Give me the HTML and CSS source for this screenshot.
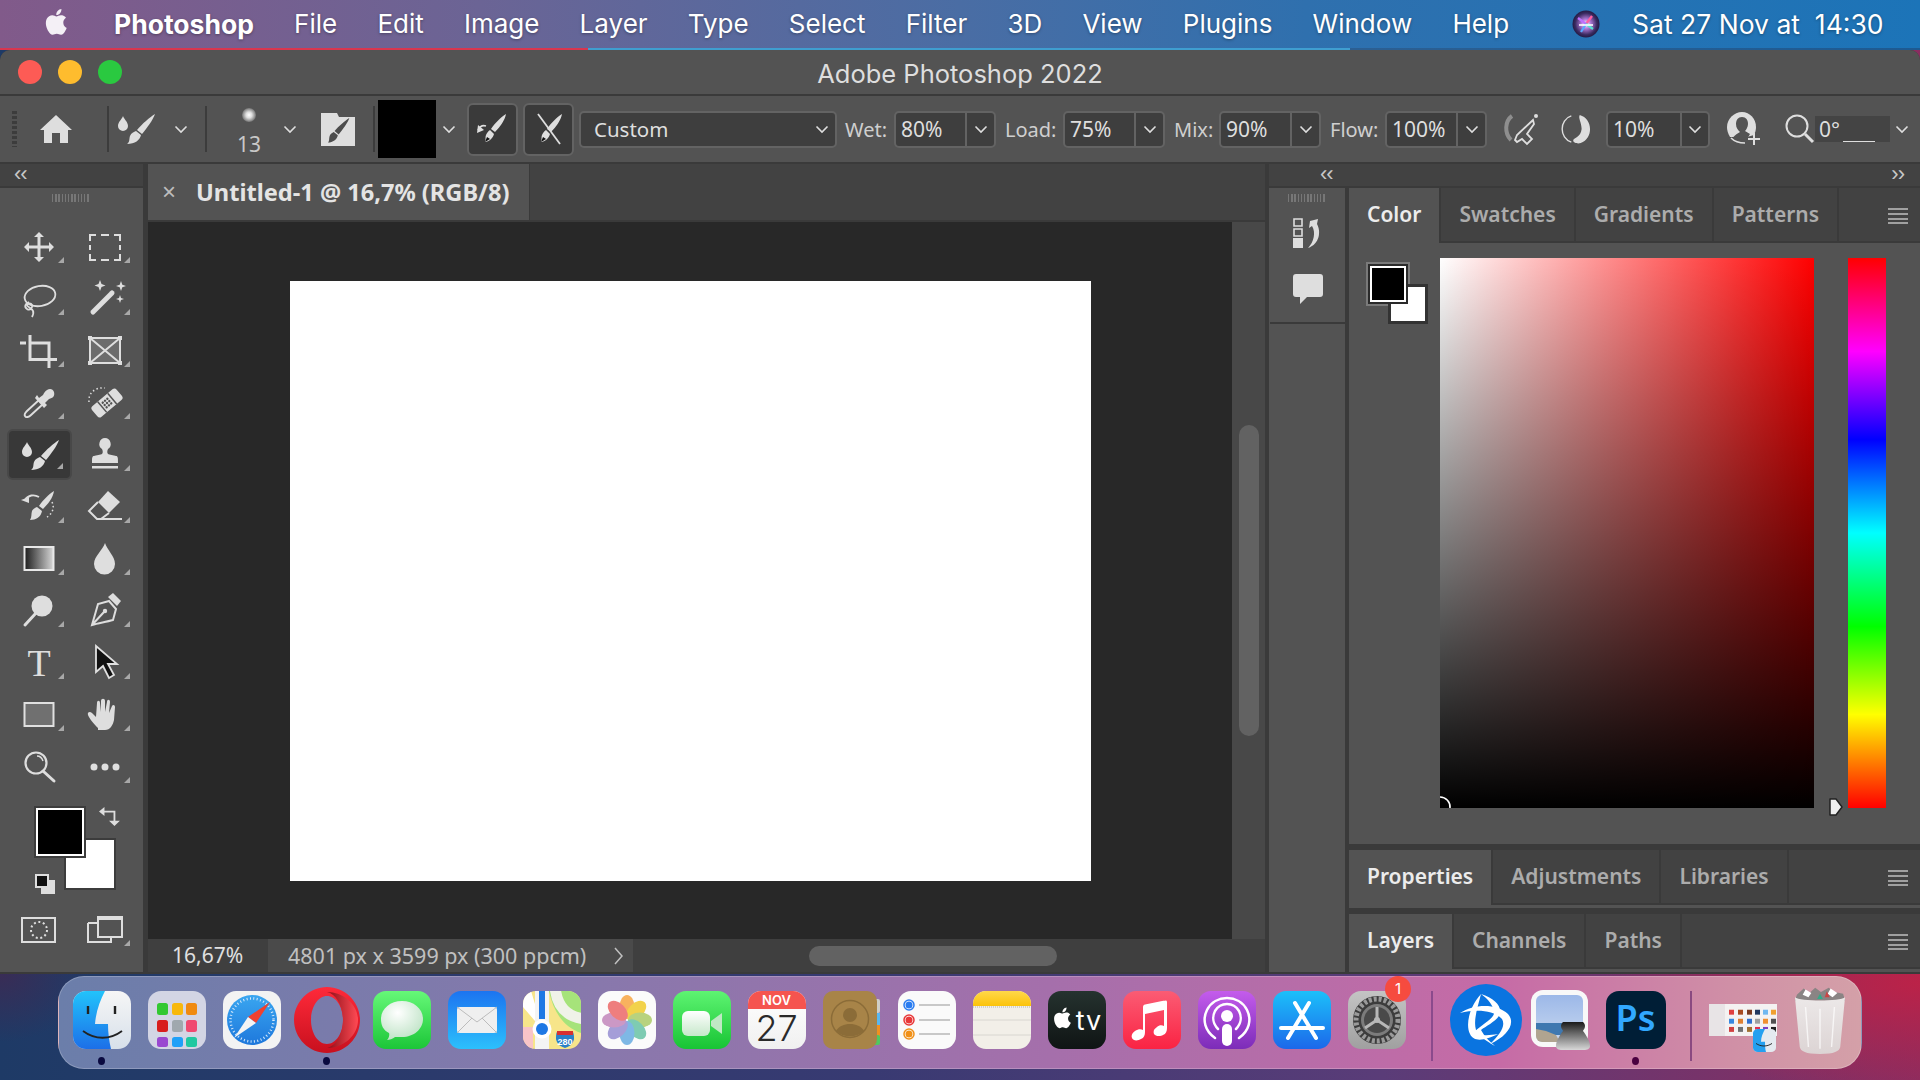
FILE: index.html
```html
<!DOCTYPE html>
<html lang="en">
<head>
<meta charset="utf-8">
<title>Adobe Photoshop 2022</title>
<link rel="stylesheet" href="styles.css">
</head>
<body>
<svg class="sprite" aria-hidden="true">
  <symbol id="chev" viewBox="0 0 14 9"><path d="M1.5 1.5 7 7l5.5-5.5" fill="none" stroke="currentColor" stroke-width="1.6"/></symbol>
  <symbol id="burger" viewBox="0 0 20 16"><path d="M0 1h20M0 6h20M0 11h20M0 15h20" fill="none" stroke="currentColor" stroke-width="1.6"/></symbol>
  <symbol id="apple" viewBox="0 0 24 24"><path fill="currentColor" d="M17.05 12.54c-.03-2.6 2.12-3.85 2.22-3.91-1.21-1.77-3.09-2.01-3.76-2.04-1.6-.16-3.12.94-3.93.94-.81 0-2.06-.92-3.39-.89-1.74.03-3.35 1.01-4.25 2.57-1.81 3.14-.46 7.8 1.3 10.35.86 1.25 1.89 2.65 3.24 2.6 1.3-.05 1.79-.84 3.36-.84s2.01.84 3.39.81c1.4-.02 2.28-1.27 3.14-2.53.99-1.45 1.4-2.85 1.42-2.93-.03-.01-2.72-1.04-2.74-4.13zM14.47 4.9c.72-.87 1.2-2.08 1.07-3.28-1.03.04-2.28.69-3.02 1.55-.66.77-1.24 2-1.09 3.18 1.15.09 2.32-.58 3.04-1.45z"/></symbol>
  <symbol id="brush" viewBox="0 0 38 30"><path fill="currentColor" d="M6 2C7 5 11 8 11 12a5 5 0 0 1-10 0C1 8 5 5 6 2zM38 0c-2 6-8 14-13 20l-5-4C25 10 33 3 38 0zM19 17l5 4c-1 5-6 9-14 9 3-2 2-5 3-8 1-3 4-4 6-5z"/></symbol>
</svg>

<header class="menubar">
  <svg class="apple"><use href="#apple"/></svg>
  <nav class="menus">
    <span class="menu menu-app">Photoshop</span>
    <span class="menu">File</span><span class="menu">Edit</span><span class="menu">Image</span><span class="menu">Layer</span><span class="menu">Type</span><span class="menu">Select</span><span class="menu">Filter</span><span class="menu">3D</span><span class="menu">View</span><span class="menu">Plugins</span><span class="menu">Window</span><span class="menu">Help</span>
  </nav>
  <svg class="siri" viewBox="0 0 28 28">
    <defs><radialGradient id="siriG" cx="50%" cy="50%" r="50%"><stop offset="0" stop-color="#fff"/><stop offset=".35" stop-color="#b07ad8"/><stop offset=".8" stop-color="#3a2a60"/><stop offset="1" stop-color="#241a44"/></radialGradient></defs>
    <circle cx="14" cy="14" r="13.5" fill="url(#siriG)"/>
    <path d="M14 14 20 6" stroke="#ff5fa2" stroke-width="2.4"/><path d="M14 14 6 8" stroke="#c070ff" stroke-width="2.2"/><path d="M14 14 21 19" stroke="#58e0d0" stroke-width="2.2"/><path d="M14 14 9 22" stroke="#58a8ff" stroke-width="2.2"/><path d="M7 15h14" stroke="#fff" stroke-width="1.6"/>
  </svg>
  <span class="clock">Sat 27 Nov at&nbsp; 14:30</span>
</header>
<div class="menuline"></div>

<main class="window">
  <div class="titlebar">
    <div class="lights"><i class="light red"></i><i class="light yellow"></i><i class="light green"></i></div>
    <div class="title">Adobe Photoshop 2022</div>
  </div>

  <div class="options">
    <i class="grip"></i>
    <svg class="opt-home" viewBox="0 0 32 30"><path fill="currentColor" d="M16 1 32 16h-4v13h-8V19h-8v10H4V16H0z"/></svg>
    <i class="vsep vsep-a"></i>
    <svg class="opt-brush"><use href="#brush"/></svg>
    <svg class="chev chev-a"><use href="#chev"/></svg>
    <i class="vsep vsep-b"></i>
    <div class="preset"><i class="preset-dot"></i><span class="preset-num">13</span></div>
    <svg class="chev chev-b"><use href="#chev"/></svg>
    <svg class="opt-folder" viewBox="0 0 34 33">
      <path fill="#dedede" d="M0 0h16l2 4h16v29H0z"/>
      <g transform="translate(7 5) scale(.82)"><path fill="#4c4c4c" d="M26 0c-2 6-8 14-13 20L8 16C13 10 21 3 26 0zM7 17l5 4c-1 5-6 9-12 9 2-2 1-5 2-8 1-3 3-4 5-5z"/></g>
    </svg>
    <i class="vsep vsep-c"></i>
    <div class="opt-swatch"></div>
    <svg class="chev chev-c"><use href="#chev"/></svg>
    <button class="toggle">
      <svg viewBox="0 0 36 36" class="toggle-ico"><path fill="#dedede" d="M31 3c-1 6-6 13-11 18l-4-3c4-6 10-12 15-15zM15 19l4 4c-1 4-5 8-9 8 1-2 0-5 1-7 1-2 2-4 4-5z"/><path fill="#111" d="M12 26l3 2-5 3z"/><path fill="none" stroke="#dedede" stroke-width="1.6" d="M3 19c2-4 5-5 8-4"/><path fill="#dedede" d="M3 14 2 22l7-3z"/></svg>
    </button>
    <button class="toggle toggle-b">
      <svg viewBox="0 0 36 36" class="toggle-ico"><path fill="#dedede" d="M31 3c-1 6-6 13-11 18l-4-3c4-6 10-12 15-15zM15 19l4 4c-1 4-5 8-9 8 1-2 0-5 1-7 1-2 2-4 4-5z"/><path fill="#111" d="M12 26l3 2-5 3z"/><path fill="none" stroke="#dedede" stroke-width="1.8" d="M7 3 29 33"/></svg>
    </button>
    <div class="select"><span>Custom</span><svg class="chev chev-s"><use href="#chev"/></svg></div>
    <label class="lbl lbl-wet">Wet:</label>
    <div class="field"><span class="val">80%</span><span class="drop"><svg class="chev"><use href="#chev"/></svg></span></div>
    <label class="lbl lbl-load">Load:</label>
    <div class="field"><span class="val">75%</span><span class="drop"><svg class="chev"><use href="#chev"/></svg></span></div>
    <label class="lbl lbl-mix">Mix:</label>
    <div class="field"><span class="val">90%</span><span class="drop"><svg class="chev"><use href="#chev"/></svg></span></div>
    <label class="lbl lbl-flow">Flow:</label>
    <div class="field"><span class="val">100%</span><span class="drop"><svg class="chev"><use href="#chev"/></svg></span></div>
    <svg class="opt-air" viewBox="0 0 36 32"><path fill="none" stroke="#8e8e8e" stroke-width="4" d="M9 3C2 8 1 20 8 27"/><path fill="none" stroke="#dedede" stroke-width="1.8" d="M30 7 14 22l-2 5 2 2 5-3 5 5 5-5-5-5 7-10z"/><circle cx="33" cy="3" r="2" fill="#dedede"/></svg>
    <svg class="opt-ring" viewBox="0 0 32 32"><path fill="none" stroke="#dedede" stroke-width="1.5" d="M11 2C-2 6-2 26 11 30"/><path fill="#dedede" d="M20 1c14 4 15 25 1 30-3 1-8 0-8-3 1-3 8-3 9-12 0-7-4-12-2-15z"/></svg>
    <div class="field field-pct"><span class="val">10%</span><span class="drop"><svg class="chev"><use href="#chev"/></svg></span></div>
    <svg class="opt-person" viewBox="0 0 36 34"><path fill="#dedede" d="M15 0c8 0 14 7 14 15 0 3-1 6-2 8l-7 2H3C1 22 0 18 0 15 0 7 7 0 15 0z"/><path fill="#535353" d="M15 5c4 0 6 3 6 7 0 3-2 6-3 7l5 3-3 5-15 1c1-4 5-6 8-8-2-2-4-4-4-8 0-4 2-7 6-7z"/><path fill="none" stroke="#dedede" stroke-width="1.6" d="M4 26c3 3 8 5 14 5"/><path stroke="#dedede" stroke-width="2" d="M27 21v12M21 27h12"/></svg>
    <svg class="opt-search" viewBox="0 0 30 30"><circle cx="12" cy="12" r="10.5" fill="none" stroke="#dedede" stroke-width="2"/><path stroke="#dedede" stroke-width="3" d="m20 20 8 8"/></svg>
    <div class="angle"><span>0°</span><i class="angle-line"></i></div>
    <svg class="chev chev-e"><use href="#chev"/></svg>
  </div>

  <div class="workspace">
    <aside class="leftpanel">
      <div class="collapse"><span class="arrows">‹‹</span></div>
      <div class="toolbar">
        <i class="handle"></i>
        <div class="tools">
          <div class="tool"><svg viewBox="0 0 36 36"><path fill="currentColor" d="M18 3l5 5h-3.500v8.500H28V13l5 5-5 5v-3.500h-8.500V28H23l-5 5-5-5h3.500v-8.500H8V23l-5-5 5-5v3.500h8.500V8H13z"/></svg><i class="more"></i></div>
          <div class="tool"><svg viewBox="0 0 36 36"><path fill="none" stroke="currentColor" stroke-width="2" d="M3 12V6h6M14 6h8M27 6h6v6M33 16v5M33 25v6h-6M22 31h-8M9 31H3v-6M3 21v-5"/></svg><i class="more"></i></div>

          <div class="tool"><svg viewBox="0 0 36 36"><g fill="none" stroke="currentColor" stroke-width="1.800"><ellipse cx="19" cy="15" rx="15.500" ry="10" transform="rotate(-10 19 15)"/><path d="M8 21c-4 1-5 5-2 7 3 2 6-1 5-4-1-2-4-2-5 0 0 2 5 3 6 6 1 2 0 4-1 6"/></g></svg><i class="more"></i></div>
          <div class="tool"><svg viewBox="0 0 36 36"><path fill="none" stroke="currentColor" stroke-width="5" stroke-linecap="round" d="M6 31 25 12"/><path fill="currentColor" d="M13 -1l1.500 4 4 1.500-4 1.500-1.500 4-1.500-4-4-1.500 4-1.500zM34 0l1.300 3.700 3.700 1.300-3.700 1.300L34 10l-1.300-3.700L29 5l3.700-1.300zM33 14l1 3 3 1-3 1-1 3-1-3-3-1 3-1z"/></svg><i class="more"></i></div>

          <div class="tool"><svg viewBox="0 0 36 36"><path fill="none" stroke="currentColor" stroke-width="3" d="M-1 10h6M9 2v24.500h27M9 10h19v25"/></svg><i class="more"></i></div>
          <div class="tool"><svg viewBox="0 0 36 36"><rect x="3" y="5" width="30" height="25" fill="#6c6c6c"/><path fill="none" stroke="currentColor" stroke-width="2" d="M3 5h30v25H3zM3 5l30 25M33 5 3 30"/><path fill="currentColor" d="M1 3h4v4H1zM31 3h4v4h-4zM1 28h4v4H1zM31 28h4v4h-4z"/></svg><i class="more"></i></div>

          <div class="tool"><svg viewBox="0 0 36 36"><path fill="none" stroke="currentColor" stroke-width="1.900" d="m18 15-12 11c-2 2-3 4-2 5 1 2 4 1 6-1l12-11"/><path fill="currentColor" d="M14 13l9 10 3-3-2-2 4-4c4-1 6-3 5-7-1-3-4-4-7-2-2 1-3 3-4 5l-4 3-2-3z"/></svg><i class="more"></i></div>
          <div class="tool"><svg viewBox="0 0 36 36"><rect x="4" y="11" width="32" height="14" rx="3" fill="currentColor" transform="rotate(-40 20 18)"/><g fill="#535353" transform="rotate(-40 20 18)"><rect x="13" y="11" width="1.500" height="14" /><rect x="26" y="11" width="1.500" height="14"/><circle cx="17" cy="15" r="1.200"/><circle cx="20" cy="15" r="1.200"/><circle cx="23" cy="15" r="1.200"/><circle cx="17" cy="18" r="1.200"/><circle cx="20" cy="18" r="1.200"/><circle cx="23" cy="18" r="1.200"/><circle cx="17" cy="21" r="1.200"/><circle cx="20" cy="21" r="1.200"/><circle cx="23" cy="21" r="1.200"/></g><path fill="none" stroke="currentColor" stroke-width="1.500" stroke-dasharray="1.500 2.500" d="M2 17C1 8 8 2 18 3"/></svg><i class="more"></i></div>

          <div class="tool tool-on"><svg class="tool-brush"><use href="#brush"/></svg><i class="more"></i></div>
          <div class="tool"><svg viewBox="0 0 36 36"><path fill="currentColor" d="M18 1a6 6 0 0 1 3 11c-1 2-1 4 0 5 1 1 6 1 8 2 2 0 2 2 2 7H5c0-5 0-7 2-7 2-1 7-1 8-2 1-1 1-3 0-5A6 6 0 0 1 18 1zM5 29h26v2.500H5z"/></svg><i class="more"></i></div>

          <div class="tool"><svg viewBox="0 0 36 36"><path fill="currentColor" d="M33 2c-1 7-6 13-11 18l-4-3c4-6 10-12 15-15zM16 18l5 4c-1 6-6 9-12 9 2-3 1-6 2-9 1-2 3-3 5-4z"/><path fill="none" stroke="currentColor" stroke-width="1.800" d="M4 11c3-5 9-6 14-3"/><path fill="currentColor" d="M0 11l8-3 0 6z"/><path fill="none" stroke="currentColor" stroke-width="1.500" stroke-dasharray="1.500 2.500" d="M31 13c3 6 0 12-5 15"/></svg><i class="more"></i></div>
          <div class="tool"><svg viewBox="0 0 36 36"><path fill="currentColor" d="M21 2 33 13 22 24 11 13z"/><path fill="none" stroke="currentColor" stroke-width="2" d="M11 13 2 22l8 8h25M14 30l8-6"/></svg><i class="more"></i></div>

          <div class="tool"><svg viewBox="0 0 36 36"><defs><linearGradient id="gradTool"><stop offset="0" stop-color="#1c1c1c"/><stop offset="1" stop-color="#d8d8d8"/></linearGradient></defs><rect x="3.500" y="6" width="29" height="23" fill="url(#gradTool)" stroke="#e8e8e8" stroke-width="2"/></svg><i class="more"></i></div>
          <div class="tool"><svg viewBox="0 0 36 36"><path fill="currentColor" d="M18 2c2 7 10 13 10 21a10.500 10.500 0 0 1-21 0C7 15 16 9 18 2z"/></svg><i class="more"></i></div>

          <div class="tool"><svg viewBox="0 0 36 36"><circle cx="21" cy="13" r="10.500" fill="currentColor"/><path stroke="currentColor" stroke-width="3" stroke-linecap="round" d="M15 20 4 32"/></svg><i class="more"></i></div>
          <div class="tool"><svg viewBox="0 0 36 36"><path fill="none" stroke="currentColor" stroke-width="2" d="M22 8 11 11C9 18 7 25 5 32c7-2 14-3 21-5l3-11zM5 32l12-13"/><circle cx="18" cy="18" r="2.200" fill="currentColor"/><path fill="currentColor" d="m26 0 8 8-4 5-9-9z"/></svg><i class="more"></i></div>

          <div class="tool"><svg viewBox="0 0 36 36"><text x="18" y="31" class="t-glyph">T</text></svg><i class="more"></i></div>
          <div class="tool"><svg viewBox="0 0 36 36"><path fill="#111" stroke="#e0e0e0" stroke-width="1.800" d="M9 1v26l7-6 6 12 5-3-6-11h9z"/></svg><i class="more"></i></div>

          <div class="tool"><svg viewBox="0 0 36 36"><rect x="3.500" y="6" width="29" height="23" fill="#707070" stroke="#e0e0e0" stroke-width="2"/></svg><i class="more"></i></div>
          <div class="tool"><svg viewBox="0 0 36 36"><path fill="currentColor" d="M11 31C7 27 2 21 1 18c-1-3 2-4 4-2l4 4 1-14c0-3 3-3 3 0l1 9V4c0-3 4-3 4 0v11l2-10c0-3 3-3 3 0l-1 11 3-7c1-2 3-1 3 1l-1 13c-1 5-4 10-9 10h-7z"/></svg><i class="more"></i></div>

          <div class="tool"><svg viewBox="0 0 36 36"><circle cx="15" cy="14" r="10.500" fill="none" stroke="currentColor" stroke-width="2.200"/><path stroke="currentColor" stroke-width="3" stroke-linecap="round" d="m22 22 11 10"/><path fill="none" stroke="currentColor" stroke-width="1.400" d="M16 7c3 0 5 2 6 5"/></svg></div>
          <div class="tool"><svg viewBox="0 0 36 36"><circle cx="7" cy="18" r="3.500" fill="currentColor"/><circle cx="18" cy="18" r="3.500" fill="currentColor"/><circle cx="29" cy="18" r="3.500" fill="currentColor"/></svg><i class="more"></i></div>
        </div>

        <div class="swatches">
          <i class="sw-bg"></i><i class="sw-fg"></i>
          <svg class="sw-swap" viewBox="0 0 22 22"><path fill="none" stroke="currentColor" stroke-width="2" d="M5 5h12v12"/><path fill="currentColor" d="M0 5l6-5v10zM11 15h12l-6 6z"/></svg>
          <i class="sw-def-bg"></i><i class="sw-def-fg"></i>
        </div>

        <div class="tools tools-last">
          <div class="tool"><svg viewBox="0 0 36 36"><rect x="1" y="6" width="33" height="24" fill="none" stroke="currentColor" stroke-width="2"/><circle cx="18" cy="18" r="8" fill="none" stroke="currentColor" stroke-width="2" stroke-dasharray="2 2.600"/></svg></div>
          <div class="tool"><svg viewBox="0 0 36 36"><path fill="none" stroke="currentColor" stroke-width="2" d="M1 11h11M1 11v19h23v-5"/><rect x="11" y="5" width="24" height="20" fill="none" stroke="currentColor" stroke-width="2"/><path stroke="currentColor" stroke-width="3" d="M11 6.500h24"/></svg><i class="more"></i></div>
        </div>
      </div>
    </aside>

    <section class="docarea">
      <div class="tabbar">
        <div class="doctab"><span class="tabx">×</span><span class="tabname">Untitled-1 @ 16,7% (RGB/8)</span></div>
      </div>
      <div class="viewrow">
        <div class="canvasarea"><div class="canvas"></div></div>
        <div class="vtrack"><i class="vthumb"></i></div>
      </div>
      <div class="statusbar">
        <span class="st-zoom">16,67%</span>
        <span class="st-info">4801 px x 3599 px (300 ppcm)<svg class="st-arrow" viewBox="0 0 9 18"><path d="M1 1l7 8-7 8" fill="none" stroke="currentColor" stroke-width="1.500"/></svg></span>
        <span class="st-track"><i class="hthumb"></i></span>
      </div>
    </section>

    <aside class="rightside">
      <div class="collapse collapse-r"><span class="arrows">‹‹</span><span class="arrows">››</span></div>
      <div class="rightbody">
        <div class="strip">
          <div class="strip-top">
            <i class="handle handle-s"></i>
            <svg class="strip-hist" viewBox="0 0 30 32"><path fill="none" stroke="#dedede" stroke-width="1.600" d="M1 1h8v7H1zM1 11h8v7H1z"/><path fill="#dedede" d="M0 20h10v10H0z"/><path fill="#dedede" d="M17 3l8-2-1 5c4 7 3 20-9 24 6-6 8-16 4-22l-3 2z"/></svg>
            <svg class="strip-note" viewBox="0 0 30 30"><path fill="#dedede" d="M3 0h24a3 3 0 0 1 3 3v17a3 3 0 0 1-3 3H14l-7 7v-7H3a3 3 0 0 1-3-3V3a3 3 0 0 1 3-3z"/></svg>
          </div>
        </div>
        <div class="panels">
          <section class="panel panel-color">
            <div class="tabs">
              <span class="tab on">Color</span><span class="tab">Swatches</span><span class="tab">Gradients</span><span class="tab">Patterns</span>
              <svg class="burger"><use href="#burger"/></svg>
            </div>
            <div class="colorbody">
              <div class="cswatch"><i class="cs-back"></i><i class="cs-bg"></i><i class="cs-fg"></i></div>
              <div class="field2d"><svg class="pick" viewBox="0 0 12 12"><path d="M0 1a10 10 0 0 1 10 11" fill="none" stroke="#fff" stroke-width="1.600"/></svg></div>
              <svg class="hue-mark" viewBox="0 0 16 18"><path d="M2 1h6l6 8-6 8H2z" fill="#eee" stroke="#222" stroke-width="1.500" stroke-linejoin="round"/></svg>
              <div class="huebar"></div>
            </div>
          </section>
          <section class="panel panel-short">
            <div class="tabs">
              <span class="tab on">Properties</span><span class="tab">Adjustments</span><span class="tab">Libraries</span>
              <svg class="burger"><use href="#burger"/></svg>
            </div>
          </section>
          <section class="panel panel-short">
            <div class="tabs">
              <span class="tab on">Layers</span><span class="tab">Channels</span><span class="tab">Paths</span>
              <svg class="burger"><use href="#burger"/></svg>
            </div>
          </section>
        </div>
      </div>
    </aside>
  </div>
</main>

<footer class="dock">
  <div class="slot"><svg viewBox="0 0 58 58" class="app"><defs><linearGradient id="fL" x1="0" y1="0" x2="0" y2="1"><stop offset="0" stop-color="#22c3fb"/><stop offset="1" stop-color="#1c6fe8"/></linearGradient><linearGradient id="fR" x1="0" y1="0" x2="0" y2="1"><stop offset="0" stop-color="#f6f6f6"/><stop offset="1" stop-color="#d7e0ea"/></linearGradient></defs><rect width="58" height="58" rx="13" fill="url(#fR)"/><path fill="url(#fL)" d="M13 0h19c-5 10-9 20-10 33h13c0 8 1 17 3 25H13A13 13 0 0 1 0 45V13A13 13 0 0 1 13 0z"/><path d="M15 15v8M42 15v8" stroke="#222" stroke-width="2.400"/><path d="M10 40c12 9 27 9 39 0" fill="none" stroke="#222" stroke-width="1.800"/></svg><i class="run"></i></div>

  <div class="slot"><svg viewBox="0 0 58 58" class="app"><rect width="58" height="58" rx="13" fill="#d3d5e4"/><rect x="9" y="12" width="11" height="12" rx="2.500" fill="#32c832"/><rect x="24" y="12" width="11" height="12" rx="2.500" fill="#f8b80c"/><rect x="38" y="12" width="11" height="12" rx="2.500" fill="#f08a10"/><rect x="9" y="29" width="11" height="12" rx="2.500" fill="#d81e1e"/><rect x="24" y="29" width="11" height="12" rx="2.500" fill="#a0a8ae"/><rect x="38" y="29" width="11" height="12" rx="2.500" fill="#f04870"/><rect x="9" y="46" width="11" height="10" rx="2.500" fill="#9a48d0"/><rect x="24" y="46" width="11" height="10" rx="2.500" fill="#20a0f8"/><rect x="38" y="46" width="11" height="10" rx="2.500" fill="#20c8a0"/></svg></div>

  <div class="slot"><svg viewBox="0 0 58 58" class="app"><defs><linearGradient id="saf" x1="0" y1="0" x2="0" y2="1"><stop offset="0" stop-color="#3aa6f0"/><stop offset="1" stop-color="#1e78dc"/></linearGradient></defs><rect width="58" height="58" rx="13" fill="#f3f3f3"/><circle cx="29" cy="29" r="25" fill="url(#saf)"/><circle cx="29" cy="29" r="21.500" fill="none" stroke="#d5e8fa" stroke-width="2.500" stroke-dasharray="1 2.400"/><path fill="#f0412f" d="M47 11 25 26l8 6z"/><path fill="#f4f4f4" d="M11 47l22-15-8-6z"/></svg></div>

  <div class="slot"><svg viewBox="0 0 66 66" class="app app-66"><defs><linearGradient id="opA" x1="0" y1="0" x2="0" y2="1"><stop offset="0" stop-color="#ff2a3a"/><stop offset="1" stop-color="#c8101e"/></linearGradient><linearGradient id="opB" x1="0" y1="0" x2="1" y2="0"><stop offset="0" stop-color="#8c0f18"/><stop offset="1" stop-color="#ff4a54"/></linearGradient></defs><path fill="url(#opA)" fill-rule="evenodd" d="M33 0c18 0 33 15 33 33S51 66 33 66 0 51 0 33 15 0 33 0zm0 9c-9 0-16 11-16 24s7 24 16 24 16-11 16-24S42 9 33 9z"/><path fill="url(#opB)" fill-rule="evenodd" d="M33 5c17 0 31 13 31 28S50 61 33 61c9-2 16-14 16-28S42 7 33 5z"/></svg><i class="run"></i></div>

  <div class="slot"><svg viewBox="0 0 58 58" class="app"><defs><linearGradient id="msgG" x1="0" y1="0" x2="0" y2="1"><stop offset="0" stop-color="#66f878"/><stop offset="1" stop-color="#1cc638"/></linearGradient><radialGradient id="msgW" cx=".4" cy=".3" r=".8"><stop offset="0" stop-color="#fff"/><stop offset="1" stop-color="#b8e0c0"/></radialGradient></defs><rect width="58" height="58" rx="13" fill="url(#msgG)"/><path fill="url(#msgW)" d="M29 10c12 0 21 8 21 18s-9 18-21 18c-3 0-5 0-7 0-2 2-6 3-8 3 1-1 3-4 2-7-6-3-8-8-8-14 0-10 9-18 21-18z"/></svg></div>

  <div class="slot"><svg viewBox="0 0 58 58" class="app"><defs><linearGradient id="mailG" x1="0" y1="0" x2="0" y2="1"><stop offset="0" stop-color="#1c74f0"/><stop offset="1" stop-color="#2cc0fc"/></linearGradient></defs><rect width="58" height="58" rx="13" fill="url(#mailG)"/><rect x="9" y="16" width="40" height="26" rx="3" fill="#efefef"/><path d="m9 16 20 15 20-15M9 42l15-15M49 42 34 27" fill="none" stroke="#bcbcbc" stroke-width="1"/></svg></div>

  <div class="slot"><svg viewBox="0 0 58 58" class="app"><defs><clipPath id="mapC"><rect width="58" height="58" rx="13"/></clipPath></defs><g clip-path="url(#mapC)"><rect width="58" height="58" fill="#f7e58a"/><path fill="#a6e37a" d="M26 0h32v42C40 36 30 20 26 0z"/><path fill="none" stroke="#f0f2e8" stroke-width="11" d="M32-4c2 20 12 30 30 32"/><path fill="#f8c4c8" d="M0 36h10v22H0z"/><path fill="#fff" d="M0 0h8l8 26-4 4L0 16z"/><rect x="12" y="-2" width="14" height="60" fill="#f4f4f4"/><rect x="16" y="-2" width="6" height="30" fill="#1e78e4"/><circle cx="19" cy="38" r="9.500" fill="#fff"/><circle cx="19" cy="38" r="6" fill="#1e78e4"/><path fill="#2a80c8" d="M33 48c0-2 0-6 1-7h16c1 2 1 5 1 7-1 6-6 8-9 9-3-1-8-3-9-9z"/><rect x="34" y="40" width="16" height="4" fill="#d83030"/><text x="42" y="54" class="map-num">280</text></g></svg></div>

  <div class="slot"><svg viewBox="0 0 58 58" class="app"><rect width="58" height="58" rx="13" fill="#fbfbfb"/><g opacity=".8"><ellipse cx="29" cy="16" rx="7.500" ry="12" fill="#f8a038"/><ellipse cx="29" cy="16" rx="7.500" ry="12" fill="#f0c820" transform="rotate(45 29 29)"/><ellipse cx="29" cy="16" rx="7.500" ry="12" fill="#a8c860" transform="rotate(90 29 29)"/><ellipse cx="29" cy="16" rx="7.500" ry="12" fill="#60c0a0" transform="rotate(135 29 29)"/><ellipse cx="29" cy="16" rx="7.500" ry="12" fill="#60a8e0" transform="rotate(180 29 29)"/><ellipse cx="29" cy="16" rx="7.500" ry="12" fill="#9088d0" transform="rotate(225 29 29)"/><ellipse cx="29" cy="16" rx="7.500" ry="12" fill="#c080b8" transform="rotate(270 29 29)"/><ellipse cx="29" cy="16" rx="7.500" ry="12" fill="#ec6060" transform="rotate(315 29 29)"/></g></svg></div>

  <div class="slot"><svg viewBox="0 0 58 58" class="app"><defs><linearGradient id="ftG" x1="0" y1="0" x2="0" y2="1"><stop offset="0" stop-color="#5ef472"/><stop offset="1" stop-color="#18c434"/></linearGradient><linearGradient id="ftW" x1="0" y1="0" x2="0" y2="1"><stop offset="0" stop-color="#fff"/><stop offset="1" stop-color="#c6e8ca"/></linearGradient></defs><rect width="58" height="58" rx="13" fill="url(#ftG)"/><rect x="9" y="20" width="28" height="25" rx="6" fill="url(#ftW)"/><path fill="#bfe8c4" d="M38 30 49 22v21l-11-8z"/></svg></div>

  <div class="slot"><div class="cal"><span class="cal-m">NOV</span><span class="cal-d">27</span></div></div>

  <div class="slot"><svg viewBox="0 0 58 58" class="app"><rect x="50" y="8" width="7" height="14" rx="2" fill="#cfcfc8"/><rect x="50" y="22" width="7" height="12" fill="#58b8f0"/><rect x="50" y="34" width="7" height="12" fill="#f09020"/><rect x="50" y="44" width="7" height="10" rx="2" fill="#50c860"/><rect width="54" height="58" rx="10" fill="#a88448"/><circle cx="27" cy="28" r="18.500" fill="none" stroke="#8b6c38" stroke-width="1.500"/><circle cx="27" cy="24" r="7" fill="#8b6c38"/><path fill="#8b6c38" d="M13 40c3-5 8-7 14-7s11 2 14 7c-7 7-21 7-28 0z"/></svg></div>

  <div class="slot"><svg viewBox="0 0 58 58" class="app"><rect width="58" height="58" rx="13" fill="#fafafa"/><circle cx="11" cy="14" r="5" fill="#fff" stroke="#2a7cf0" stroke-width="1.500"/><circle cx="11" cy="14" r="3.500" fill="#2a7cf0"/><circle cx="11" cy="29" r="5" fill="#fff" stroke="#e83838" stroke-width="1.500"/><circle cx="11" cy="29" r="3.500" fill="#e83838"/><circle cx="11" cy="43" r="5" fill="#fff" stroke="#f09018" stroke-width="1.500"/><circle cx="11" cy="43" r="3.500" fill="#f09018"/><path d="M21 14h31M21 29h31M21 43h31" stroke="#b8b8b8" stroke-width="1.500"/></svg></div>

  <div class="slot"><svg viewBox="0 0 58 58" class="app"><defs><clipPath id="noteC"><rect width="58" height="58" rx="13"/></clipPath><linearGradient id="noteY" x1="0" y1="0" x2="0" y2="1"><stop offset="0" stop-color="#ffd84a"/><stop offset="1" stop-color="#fcc30a"/></linearGradient></defs><g clip-path="url(#noteC)"><rect width="58" height="58" fill="#f2efe8"/><rect width="58" height="15" fill="url(#noteY)"/><path d="M0 16h58" stroke="#c8c8c0" stroke-width="1.500" stroke-dasharray="1 1"/><path d="M0 29h58M0 44h58" stroke="#d8d6d0" stroke-width="1"/></g></svg></div>

  <div class="slot"><div class="tv"><svg class="tv-apple"><use href="#apple"/></svg><span class="tv-t">tv</span></div></div>

  <div class="slot"><svg viewBox="0 0 58 58" class="app"><defs><linearGradient id="musG" x1="0" y1="0" x2="0" y2="1"><stop offset="0" stop-color="#fb5c74"/><stop offset="1" stop-color="#fa2343"/></linearGradient></defs><rect width="58" height="58" rx="13" fill="url(#musG)"/><path fill="#fff" d="M44 9 22 13.500c-1 0-2 1-2 2.500v23c-2-1-5-1-8 1-3 2-4 5-3 7 1 3 6 3 9 1 3-1 4-4 4-7V23l19-4v16c-2-1-5-1-7 1-3 2-4 4-3 7 1 2 6 3 9 1 3-1 4-4 4-7V11c0-1-1-2-2-2z"/></svg></div>

  <div class="slot"><svg viewBox="0 0 58 58" class="app"><defs><linearGradient id="podG" x1="0" y1="0" x2="0" y2="1"><stop offset="0" stop-color="#c45cec"/><stop offset="1" stop-color="#7c2cb8"/></linearGradient></defs><rect width="58" height="58" rx="13" fill="url(#podG)"/><g fill="none" stroke="#fff" stroke-linecap="round"><path stroke-width="2.500" d="M17 47C7 40 4 29 9 19c4-8 12-12 20-12s16 4 20 12c5 10 2 21-8 28"/><path stroke-width="2.500" d="M20 38c-5-5-6-12-3-18 3-5 7-7 12-7s9 2 12 7c3 6 2 13-3 18"/></g><circle cx="29" cy="25" r="6" fill="#fff"/><rect x="24" y="33" width="10" height="22" rx="5" fill="#fff"/></svg></div>

  <div class="slot"><svg viewBox="0 0 58 58" class="app"><defs><linearGradient id="asG" x1="0" y1="0" x2="0" y2="1"><stop offset="0" stop-color="#1cc0fa"/><stop offset="1" stop-color="#1c68ea"/></linearGradient></defs><rect width="58" height="58" rx="13" fill="url(#asG)"/><g stroke="#fff" stroke-width="4" stroke-linecap="round"><path d="M36 12 15 47M22 12l21 35M8 37h42"/></g></svg></div>

  <div class="slot"><svg viewBox="0 0 58 58" class="app"><defs><linearGradient id="spG" x1="0" y1="0" x2="0" y2="1"><stop offset="0" stop-color="#c4c4c4"/><stop offset="1" stop-color="#a0a0a0"/></linearGradient></defs><rect width="58" height="58" rx="13" fill="url(#spG)"/><circle cx="29" cy="29" r="24" fill="#3c3c3c"/><circle cx="29" cy="29" r="21" fill="none" stroke="#9a9a9a" stroke-width="5" stroke-dasharray="3 2"/><circle cx="29" cy="29" r="16" fill="#7c7c7c"/><circle cx="29" cy="29" r="13" fill="#4a4a4a"/><path stroke="#b8b8b8" stroke-width="3" d="M29 29V16M29 29l-12 8M29 29l12 8"/><circle cx="29" cy="29" r="3" fill="#b8b8b8"/></svg><span class="badge">1</span></div>

  <i class="dockdiv"></i>

  <div class="slot"><svg viewBox="0 0 72 72" class="app app-72"><circle cx="36" cy="36" r="36" fill="#0a74e0"/><g fill="#fff"><path d="M10 29C24 20 46 19 58 30 66 39 58 52 40 60 50 50 56 42 52 35 44 26 26 25 10 29Z"/><path d="M31 10C20 22 15 40 20 50 24 59 36 56 48 50 36 52 28 52 26 46 23 36 28 22 31 10Z"/><path d="M31 10C44 14 52 22 50 30 47 37 36 42 31 46 34 52 39 57 45 62 38 58 30 53 25 47 33 40 44 34 44 29 44 22 38 15 31 10Z"/></g></svg></div>

  <div class="slot"><svg viewBox="0 0 60 62" class="app app-60"><defs><linearGradient id="pvS" x1="0" y1="0" x2="0" y2="1"><stop offset="0" stop-color="#9cb8e8"/><stop offset="1" stop-color="#c8d8f0"/></linearGradient><linearGradient id="pvL" x1="0" y1="0" x2="0" y2="1"><stop offset="0" stop-color="#1a1a1a"/><stop offset=".3" stop-color="#555"/><stop offset="1" stop-color="#d8d8d8"/></linearGradient></defs><rect x="0" y="1" width="57" height="57" rx="12" fill="#f8f8f8"/><rect x="5" y="6" width="47" height="47" rx="6" fill="url(#pvS)"/><path fill="#3f78b0" d="M5 34h47v12H5z"/><path fill="#b0a490" d="M5 40l10 2 10 4 4 7H11a6 6 0 0 1-6-6z"/><path fill="url(#pvL)" d="M30 37c0-2 1-3 2-4h20c1 1 2 2 2 4 0 3-2 4-2 5 3 4 7 10 7 15 0 3-3 4-6 4H31c-3 0-6-1-6-4 0-5 4-11 7-15 0-1-2-2-2-5z"/></svg></div>

  <div class="slot"><div class="ps">Ps</div><i class="run run-ps"></i></div>

  <i class="dockdiv dockdiv-r"></i>

  <div class="slot"><svg viewBox="0 0 68 60" class="app app-stack"><g transform="translate(0 14) scale(1 .82)"><rect x="0" y="0" width="68" height="39" fill="#f4f2f2"/><rect x="0" y="0" width="16" height="39" fill="#e8e4e6"/><rect x="20" y="7" width="5" height="6" fill="#e04040"/><rect x="29" y="7" width="5" height="6" fill="#a84a20"/><rect x="38" y="7" width="5" height="6" fill="#7a3a20"/><rect x="46" y="7" width="5" height="6" fill="#203860"/><rect x="54" y="7" width="5" height="6" fill="#70b8f0"/><rect x="62" y="7" width="5" height="6" fill="#f0a030"/><rect x="20" y="18" width="5" height="6" fill="#3888e0"/><rect x="29" y="18" width="5" height="6" fill="#e08030"/><rect x="38" y="18" width="5" height="6" fill="#3070d0"/><rect x="46" y="18" width="5" height="6" fill="#a0a0a0"/><rect x="54" y="18" width="5" height="6" fill="#f09030"/><rect x="62" y="18" width="5" height="6" fill="#505050"/><rect x="20" y="28" width="5" height="6" fill="#d04040"/><rect x="29" y="28" width="5" height="6" fill="#707070"/><rect x="38" y="28" width="5" height="6" fill="#a07030"/><rect x="46" y="28" width="5" height="6" fill="#e03050"/><rect x="54" y="28" width="5" height="6" fill="#8040c0"/><rect x="62" y="28" width="5" height="6" fill="#202020"/></g><g transform="translate(44 39) scale(1 .85)"><rect width="23" height="27" rx="5" fill="#e4eaf0"/><path fill="#24a0f0" d="M5 0h7c-2 5-4 9-4 15h4c0 4 0 8 1 12H5a5 5 0 0 1-5-5V5a5 5 0 0 1 5-5z"/><path d="M3 17c5 4 11 4 16 0" fill="none" stroke="#222" stroke-width="1"/></g></svg></div>

  <div class="slot slot-trash"><svg viewBox="0 0 54 78" preserveAspectRatio="none" class="app app-trash"><defs><linearGradient id="trG" x1="0" y1="0" x2="0" y2="1"><stop offset="0" stop-color="#ece8e8"/><stop offset="1" stop-color="#dcd4d4"/></linearGradient></defs><path fill="#8a8484" d="M3 10 10 3l6 5 6-6 6 5 8-5 6 5 9 2 2 8H1z"/><path fill="#fff" d="M12 4l6 4-3 5-6-3zM38 3l7 5-5 5-5-4z"/><path fill="#c44" d="M34 6l3 7h-5z"/><path fill="#3a8" d="M27 9l3 6h-6z"/><path fill="url(#trG)" d="M1 13c5 5 47 5 52 0l-5 57c-1 5-6 8-21 8S7 75 6 70z"/><path fill="none" stroke="#fff" stroke-width="1.500" opacity=".7" d="M12 24l3 46M27 26v46M42 24l-3 46"/></svg></div>
</footer>
</body>
</html>
```
FILE: styles.css
```css
* { box-sizing: border-box; }
html, body { margin: 0; padding: 0; }
body {
  width: 1920px; height: 1080px; overflow: hidden;
  display: flex; flex-direction: column;
  font-family: "Inter", "Liberation Sans", sans-serif;
  color: #dedede;
  background:
    radial-gradient(ellipse 90px 70px at 0 90%, #3a2c55 0, rgba(58,44,85,0) 100%),
    radial-gradient(ellipse 320px 110px at 100% 91%, #bb2248 0, rgba(187,34,72,0) 100%),
    linear-gradient(90deg, #1e3a66 0%, #383a72 45%, #5a3c78 72%, #8a2d60 100%);
}
.sprite { position: absolute; width: 0; height: 0; }
i { display: block; font-style: normal; }
svg { overflow: visible; display: block; }

/* menu bar */
.menubar {
  height: 48px; flex: none; display: flex; align-items: center;
  padding-left: 45px; color: #fff;
  background: linear-gradient(90deg, #815a8a 0%, #6b6495 25%, #4a6da4 50%, #2f70ae 68%, #1c74b8 100%);
  text-shadow: 0 1px 3px rgba(0,0,0,.35);
}
.apple { width: 30px; height: 34px; margin-left: -3px; margin-top: -4px; color: #f4f0f6; flex: none; }
.menus { display: flex; gap: 40.200px; margin-left: 42px; font-size: 26px; }
.menu-app { font-weight: 700; font-size: 26.500px; }
.siri { width: 28px; height: 28px; margin-left: 63px; flex: none; }
.clock { font-size: 26.500px; margin-left: 32px; white-space: nowrap; }
.menuline { height: 2px; flex: none; background: linear-gradient(90deg, #d9364f 0, #d9364f 588px, #3f9ed0 588px, #3f9ed0 1350px, #2c5f92 1350px, #1d5a92 100%); }

/* window */
.window { height: 924px; flex: none; background: #3a3a3a; border-radius: 10px 10px 0 0; display: flex; flex-direction: column; overflow: hidden; }
.titlebar { height: 44px; flex: none; background: #535353; display: flex; align-items: center; position: relative; }
.lights { display: flex; gap: 16px; padding-left: 18px; }
.light { width: 24px; height: 24px; border-radius: 50%; }
.red { background: #fd5b55; }
.yellow { background: #febc2e; }
.green { background: #2ac940; }
.title { position: absolute; left: 0; right: 0; top: 8px; text-align: center; font-size: 25.500px; color: #dedede; }

/* options */
.options {
  height: 70px; flex: none; border-top: 2px solid #3a3a3a; border-bottom: 2px solid #3a3a3a;
  background: #535353; display: flex; align-items: center; padding-left: 12px;
  font-family: "Noto Sans", sans-serif; font-size: 20px; color: #dedede;
}
.grip { width: 5px; height: 36px; background: repeating-linear-gradient(180deg, #3c3c3c 0 3px, transparent 3px 5px); flex: none; }
.opt-home { width: 32px; height: 30px; margin-left: 23px; color: #dedede; flex: none; }
.vsep { width: 2px; height: 46px; background: #3c3c3c; flex: none; }
.vsep-a { margin-left: 35px; }
.opt-brush { width: 38px; height: 30px; margin-left: 8px; color: #dedede; flex: none; }
.chev { width: 14px; height: 9px; color: #dedede; flex: none; }
.chev-a { margin-left: 19px; }
.vsep-b { margin-left: 17px; }
.preset { width: 50px; margin-left: 17px; flex: none; height: 60px; display: flex; flex-direction: column; align-items: center; position: relative; }
.preset-dot { width: 14px; height: 14px; border-radius: 50%; margin-top: 9px; background: radial-gradient(circle, #fff 0, #ddd 30%, #777 70%, #535353 100%); }
.preset-num { font-size: 21px; color: #c8c8c8; margin-top: 9px; line-height: 27px; }
.chev-b { margin-left: 9px; }
.opt-folder { width: 34px; height: 33px; margin-left: 24px; flex: none; }
.vsep-c { margin-left: 18px; }
.opt-swatch { width: 58px; height: 58px; margin-left: 3px; background: #000; flex: none; }
.chev-c { margin-left: 6px; }
.toggle { width: 51px; height: 53px; margin-left: 11px; background: #3a3a3a; border: 2px solid #636363; border-radius: 6px; padding: 0; display: flex; align-items: center; justify-content: center; flex: none; }
.toggle-b { margin-left: 5px; }
.toggle-ico { width: 36px; height: 36px; }
.select { width: 258px; height: 37px; margin-left: 5px; background: #3e3e3e; border: 2px solid #636363; border-radius: 5px; display: flex; align-items: center; justify-content: space-between; padding: 0 6px 0 13px; flex: none; font-size: 20.500px; }
.lbl { color: #cfcfcf; flex: none; white-space: nowrap; }
.lbl-wet { margin-left: 8px; width: 49px; }
.lbl-load { width: 58px; }
.lbl-mix { width: 45px; }
.lbl-flow { width: 55px; }
.field { width: 102px; height: 37px; background: #3e3e3e; border: 2px solid #636363; border-radius: 5px; display: flex; align-items: center; margin-right: 9px; flex: none; font-size: 21px; }
.val { width: 69px; padding-left: 5px; }
.drop { flex: 1; height: 100%; border-left: 2px solid #636363; display: flex; align-items: center; justify-content: center; }
.opt-air { width: 36px; height: 32px; margin-left: 7px; flex: none; }
.opt-ring { width: 30px; height: 32px; margin-left: 22px; flex: none; }
.field-pct { margin-left: 15px; margin-right: 0; width: 104px; }
.field-pct .val { width: 72px; }
.opt-person { width: 36px; height: 34px; margin-left: 17px; flex: none; }
.opt-search { width: 30px; height: 30px; margin-left: 22px; flex: none; }
.angle { width: 75px; height: 26px; background: #444; padding-left: 4px; line-height: 26px; position: relative; flex: none; font-size: 21px; }
.angle-line { position: absolute; left: 28px; right: 15px; bottom: 0; height: 1px; background: #dedede; }
.chev-e { margin-left: 5px; }

/* workspace */
.workspace { flex: 1; display: flex; min-height: 0; padding-bottom: 2px; }
.collapse { height: 22px; background: #424242; display: flex; align-items: center; padding-left: 14px; flex: none; }
.arrows { font-family: "Liberation Sans", sans-serif; font-size: 22px; line-height: 20px; color: #c8c8c8; letter-spacing: -1px; margin-top: -3px; }

/* left */
.leftpanel { width: 143px; flex: none; display: flex; flex-direction: column; margin-right: 5px; }
.toolbar { flex: 1; margin-top: 2px; background: #535353; padding-left: 6px; position: relative; }
.handle { width: 38px; height: 8px; margin: 6px 0 0 46px; background: repeating-linear-gradient(90deg, #777 0 1.500px, transparent 1.500px 3.200px); }
.tools { display: grid; grid-template-columns: 66px 66px; grid-auto-rows: 52px; margin-top: 19px; }
.tools-last { margin-top: 10px; }
.tool { position: relative; display: flex; align-items: center; justify-content: center; color: #dedede; }
.tool svg { width: 36px; height: 36px; }
.tool-on { background: #383838; border: 2px solid #484848; border-radius: 6px; margin: 0 0 1px 1px; }
.tool svg.tool-brush { width: 38px; height: 30px; }
.more { position: absolute; right: 8px; bottom: 10px; width: 0; height: 0; border-left: 6px solid transparent; border-bottom: 6px solid #a8a8a8; }
.tool-on .more { right: 7px; bottom: 9px; }
.t-glyph { font-family: "Liberation Serif", serif; font-size: 38px; fill: #dedede; text-anchor: middle; }
.swatches { position: relative; height: 90px; margin-top: 11px; }
.sw-fg { position: absolute; left: 30px; top: 4px; width: 48px; height: 48px; background: #000; border: 2px solid #fff; outline: 2px solid #3c3c3c; }
.sw-bg { position: absolute; left: 58px; top: 34px; width: 52px; height: 52px; background: #fff; border: 2px solid #3c3c3c; }
.sw-swap { position: absolute; left: 93px; top: 3px; width: 20px; height: 20px; color: #dedede; }
.sw-def-fg { position: absolute; left: 29px; top: 70px; width: 14px; height: 14px; background: #111; border: 2px solid #dedede; }
.sw-def-bg { position: absolute; left: 35px; top: 76px; width: 14px; height: 14px; background: #dedede; }

/* document */
.docarea { width: 1117px; flex: none; display: flex; flex-direction: column; margin-right: 4px; }
.tabbar { height: 56px; flex: none; background: #424242; }
.doctab { width: 382px; height: 56px; background: #535353; display: flex; align-items: center; padding-left: 14px; border-right: 1px solid #3a3a3a; }
.tabx { font-family: "Liberation Sans", sans-serif; font-size: 24px; color: #bdbdbd; width: 34px; }
.tabname { font-family: "Noto Sans", sans-serif; font-weight: 700; font-size: 23.600px; color: #e4e4e4; white-space: nowrap; }
.viewrow { flex: 1; display: flex; min-height: 0; margin-top: 2px; }
.canvasarea { flex: 1; background: #282828; padding: 59px 0 0 142px; }
.canvas { width: 801px; height: 600px; background: #fff; }
.vtrack { width: 33px; flex: none; background: #484848; padding: 203px 0 0 7px; }
.vthumb { width: 20px; height: 311px; background: #626262; border-radius: 10px; }
.statusbar { height: 33px; flex: none; display: flex; font-family: "Noto Sans", sans-serif; font-size: 21px; background: #3f3f3f; }
.st-zoom { width: 120px; padding-left: 24px; line-height: 33px; color: #e0e0e0; flex: none; }
.st-info { width: 365px; padding-left: 20px; line-height: 33px; background: #4a4a4a; color: #c0c0c0; position: relative; flex: none; white-space: nowrap; font-size: 21.500px; }
.st-arrow { position: absolute; right: 10px; top: 8px; width: 9px; height: 18px; }
.st-track { flex: 1; padding: 7px 0 0 176px; }
.hthumb { width: 248px; height: 20px; background: #626262; border-radius: 10px; }

/* right */
.rightside { flex: 1; display: flex; flex-direction: column; }
.collapse-r { justify-content: space-between; padding: 0 16px 0 51px; }
.rightbody { flex: 1; display: flex; margin-top: 2px; min-height: 0; }
.strip { width: 76px; flex: none; margin-right: 4px; background: #535353; padding-left: 1px; }
.strip-top { height: 136px; border-bottom: 2px solid #3a3a3a; display: flex; flex-direction: column; }
.handle-s { margin: 6px 0 0 18px; }
.strip-hist { width: 30px; height: 32px; margin: 16px 0 0 23px; }
.strip-note { width: 30px; height: 30px; margin: 24px 0 0 23px; }
.panels { flex: 1; display: flex; flex-direction: column; gap: 6px; }
.panel { background: #535353; display: flex; flex-direction: column; }
.panel-color { flex: 1; }
.panel-short { height: 58px; flex: none; }
.tabs { height: 55px; display: flex; position: relative; background: #424242; flex: none; font-family: "Noto Sans", sans-serif; font-size: 21px; font-weight: 600; color: #acacac; border-bottom: 2px solid #3a3a3a; }
.tab { padding: 0 18px; line-height: 53px; border-right: 2px solid #3a3a3a; flex: none; white-space: nowrap; }
.tab.on { background: #535353; color: #ececec; height: 55px; }
.burger { position: absolute; right: 12px; top: 20px; width: 20px; height: 16px; color: #c0c0c0; }
.colorbody { flex: 1; display: flex; align-items: flex-start; padding: 15px 0 0 17px; }
.cswatch { position: relative; width: 74px; flex: none; height: 64px; margin-top: 4px; }
.cs-back { position: absolute; left: 0; top: 0; width: 44px; height: 44px; background: #7a7a7a; }
.cs-bg { position: absolute; left: 22px; top: 22px; width: 40px; height: 40px; background: #fff; border: 3px solid #333; }
.cs-fg { position: absolute; left: 2px; top: 2px; width: 40px; height: 40px; background: #000; border: 2px solid #2a2a2a; box-shadow: inset 0 0 0 2px #fff; }
.field2d { width: 374px; height: 550px; flex: none; position: relative; background: linear-gradient(to top, #000, rgba(0,0,0,0)), linear-gradient(to right, #fff, #f00); }
.pick { position: absolute; left: 0; bottom: 0; width: 12px; height: 12px; }
.hue-mark { width: 16px; height: 18px; margin: 540px 4px 0 14px; flex: none; }
.huebar { width: 38px; height: 550px; flex: none; background: linear-gradient(to bottom, #f00 0%, #f0f 17%, #00f 33%, #0ff 50%, #0f0 67%, #ff0 83%, #f00 100%); }

/* dock */
.dock {
  width: 1804px; height: 93px; margin: 2px 0 0 58px; flex: none;
  border-radius: 26px; border: 1px solid rgba(255,255,255,.22);
  background: linear-gradient(90deg, #6b7eaa 0%, #8878ac 30%, #a56fab 55%, #c66ba6 80%, #d090a6 93%, #d4a0a8 100%);
  display: flex; align-items: flex-start; padding: 14px 0 0 5px;
  font-family: "Inter", sans-serif;
}
.slot { width: 75px; height: 58px; flex: none; display: flex; align-items: center; justify-content: center; position: relative; }
.app { width: 58px; height: 58px; flex: none; }
.app-66 { width: 66px; height: 66px; }
.app-72 { width: 72px; height: 72px; }
.app-60 { width: 60px; height: 62px; }
.app-stack { width: 68px; height: 60px; }
.app-trash { width: 52px; height: 68px; }
.run { position: absolute; left: 34px; bottom: -16px; width: 7px; height: 8px; border-radius: 50%; background: #0a0a40; }
.run-ps { background: #4a0040; }
.badge { position: absolute; left: 46px; top: -15px; width: 26px; height: 26px; border-radius: 50%; background: #f64b3f; color: #fff; font-size: 15px; line-height: 26px; text-align: center; }
.dockdiv { width: 2px; height: 70px; margin: 0 15px 0 17px; background: #8b4a8c; flex: none; }
.dockdiv-r { background: #8a4a80; margin: 0 13px 0 17px; }
.slot-trash { margin-left: 2px; }
.cal { width: 58px; height: 58px; border-radius: 13px; background: linear-gradient(#fff, #f0f0f0); display: flex; flex-direction: column; align-items: center; }
.cal-m { width: 100%; height: 18px; background: #f5544f; color: #fff; font-size: 13px; font-weight: 600; text-align: center; line-height: 18px; flex: none; border-radius: 13px 13px 0 0; }
.cal-d { font-size: 36px; line-height: 38px; color: #2a2a2a; font-weight: 300; }
.tv { width: 58px; height: 58px; border-radius: 13px; background: linear-gradient(#25322f, #0f1414); display: flex; align-items: center; justify-content: center; gap: 1px; color: #fff; }
.tv-apple { width: 24px; height: 26px; color: #fff; flex: none; margin-top: -4px; }
.tv-t { font-size: 27px; font-weight: 400; letter-spacing: 1px; font-family: "Inter", sans-serif; }
.ps { width: 60px; height: 58px; border-radius: 13px; background: #001e36; color: #31a8ff; font-family: "Noto Sans", sans-serif; font-size: 36px; font-weight: 600; text-align: center; line-height: 54px; }
.map-num { font-family: "Liberation Sans", sans-serif; font-size: 9px; font-weight: 700; fill: #fff; text-anchor: middle; }
```
